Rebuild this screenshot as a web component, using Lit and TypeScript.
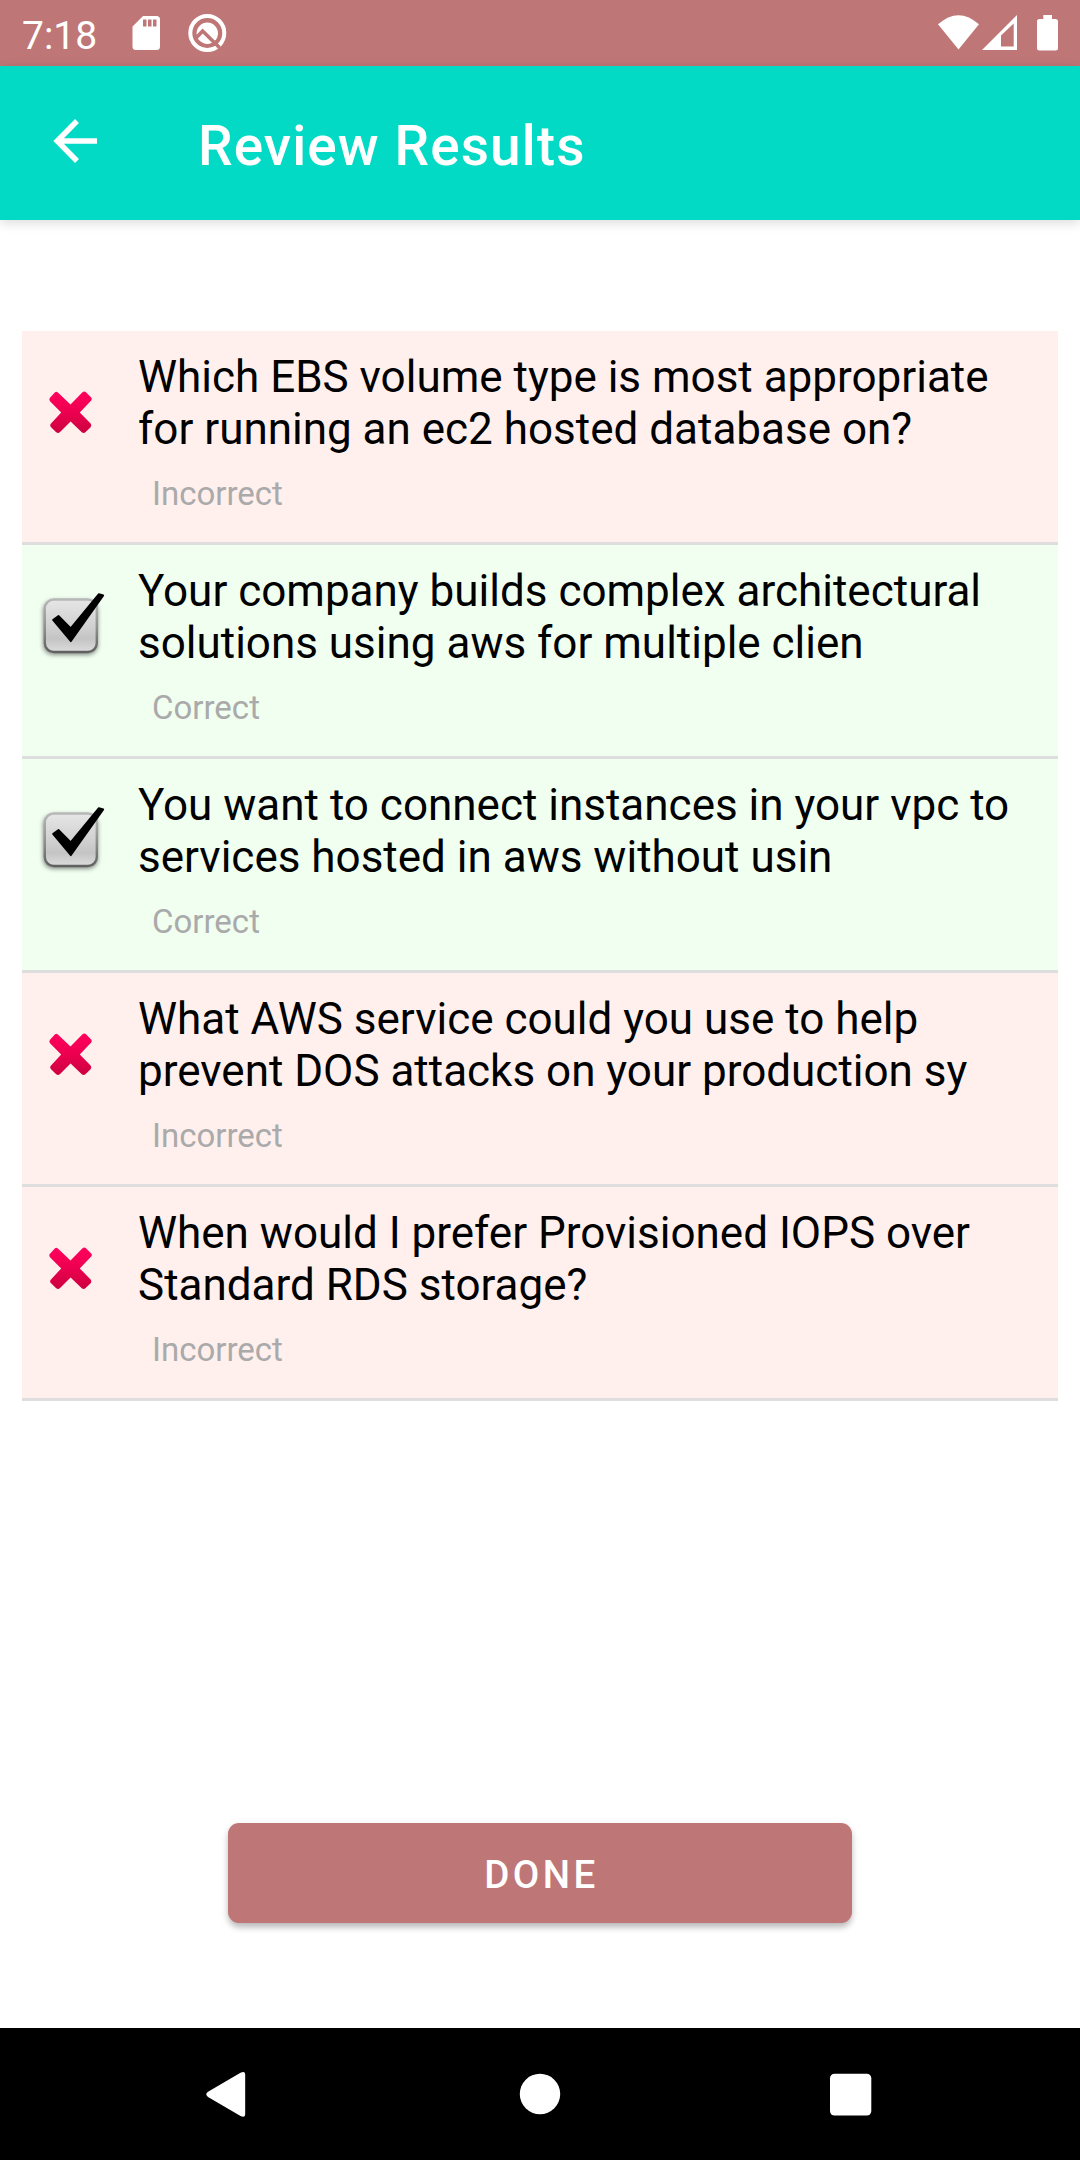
import { LitElement, html, svg, css } from "lit";
import { customElement, property } from "lit/decorators.js";

interface Result {
  question: [string, string];
  correct: boolean;
}

const RESULTS: Result[] = [
  { question: ["Which EBS volume type is most appropriate", "for running an ec2 hosted database on?"], correct: false },
  { question: ["Your company builds complex architectural", "solutions using aws for multiple clien"], correct: true },
  { question: ["You want to connect instances in your vpc to", "services hosted in aws without usin"], correct: true },
  { question: ["What AWS service could you use to help", "prevent DOS attacks on your production sy"], correct: false },
  { question: ["When would I prefer Provisioned IOPS over", "Standard RDS storage?"], correct: false },
];

const crossIcon = svg`
  <defs>
    <linearGradient id="red" x1="0" y1="23" x2="0" y2="63" gradientUnits="userSpaceOnUse">
      <stop offset="0" stop-color="#ff005c"/><stop offset=".45" stop-color="#ee0050"/><stop offset="1" stop-color="#cc0040"/>
    </linearGradient>
  </defs>
  <path d="M57.600 22.300L70.500 34.500L82.500 22.300Q84.300 20.900 86 22.300L91.200 27.400Q92.500 29 91.200 30.600L79.800 42.400L90.600 53.600Q92 55.400 90.600 57.200L85.400 62.200Q83.600 63.600 81.800 62.200L70.600 51.600L59.800 62.200Q58 63.600 56.200 62.200L50.800 57Q49.400 55.400 50.800 53.800L61.200 42.400L50 31.200Q48.600 29.400 50 27.800L54.800 22.500Q56.200 21.100 57.600 22.300Z" fill="url(#red)" transform="translate(-22 0)"/>`;

const checkIcon = svg`
  <defs>
    <linearGradient id="box" x1="0" y1="0" x2="0" y2="1">
      <stop offset="0" stop-color="#e6e6e6"/><stop offset=".55" stop-color="#cfcfcf"/><stop offset=".75" stop-color="#c4c4c4"/><stop offset="1" stop-color="#dcdcdc"/>
    </linearGradient>
    <linearGradient id="rim" x1="0" y1="0" x2="0" y2="1">
      <stop offset="0" stop-color="#b8b8b8"/><stop offset=".6" stop-color="#8a8a8a"/><stop offset="1" stop-color="#606060"/>
    </linearGradient>
    <filter id="soft" x="-20%" y="-20%" width="140%" height="140%"><feGaussianBlur stdDeviation="2"/></filter>
  </defs>
  <rect x="21" y="30.500" width="55" height="54.500" rx="10" fill="#555" opacity=".65" filter="url(#soft)"/>
  <rect x="22.800" y="29.500" width="52" height="52.500" rx="9" fill="url(#box)" stroke="url(#rim)" stroke-width="2.400"/>
  <path d="M31 50L36.500 45.900L48.600 58.200L76.800 24L81.300 25.400L48.800 71.300Z" fill="#000" stroke="#000" stroke-width="1.700" stroke-linejoin="round"/>`;

@customElement("status-bar")
export class StatusBar extends LitElement {
  static styles = css`
    :host { display: flex; align-items: center; height: 66px; background: #bf7676; color: #fff; }
    .time { font-size: 39px; line-height: 66px; padding: 3px 0 0 22px; width: 98px; height: 63px; }
    .icon { display: block; fill: #fff; }
    .spacer { flex: 1; }
  `;
  render() {
    return html`
      <span class="time">7:18</span>
      <svg class="icon" width="130" height="66" viewBox="120 0 130 66">
        <path fill-rule="evenodd" d="M143 16H156.500Q160 16 160 19.500V46.500Q160 50 156.500 50H136Q132.500 50 132.500 46.500V26.500ZM143 19.500V26.500H146.500V19.500ZM148 19.500V26.500H151.500V19.500ZM153 19.500V26.500H156.500V19.500Z"/>
        <circle cx="207.300" cy="33" r="17" fill="none" stroke="#fff" stroke-width="4"/>
        <circle cx="207.300" cy="33.300" r="10.700"/>
        <path d="M195.500 38.500L202.600 31L219.200 47.300" fill="none" stroke="#bf7676" stroke-width="3.600"/>
        <path d="M214.800 43L221 49.200" fill="none" stroke="#bf7676" stroke-width="3"/>
      </svg>
      <span class="spacer"></span>
      <svg class="icon" width="150" height="66" viewBox="930 0 150 66">
        <path d="M938 24.300Q958.500 6 979 24.300L958.500 49.500Z"/>
        <path fill-rule="evenodd" d="M982 50L1017 15V50ZM1001 35.500V46.500H1013.700V23.500Z"/>
        <path d="M1043.300 15H1052V19H1055.500Q1058 19 1058 21.500V48Q1058 50.500 1055.500 50.500H1039.500Q1037 50.500 1037 48V21.500Q1037 19 1039.500 19H1043.300Z"/>
      </svg>
    `;
  }
}

@customElement("app-bar")
export class AppBar extends LitElement {
  static styles = css`
    :host { display: flex; align-items: center; height: 154px; background: #03dac5; color: #fff; box-shadow: 0 3px 11px rgba(0, 0, 0, 0.14); }
    .back { display: block; margin: 0 0 4px 53px; }
    .title { margin: 0; padding: 6px 0 0 101px; font-size: 55px; font-weight: 500; line-height: 64px; letter-spacing: 1.07px; }
  `;
  render() {
    return html`
      <svg class="back" width="44" height="44" viewBox="0 0 44 44" fill="none" stroke="#fff" stroke-width="5.500">
        <path d="M24 2L4.200 22L24 42M4 22H44"/>
      </svg>
      <h1 class="title">Review Results</h1>
    `;
  }
}

@customElement("result-row")
export class ResultRow extends LitElement {
  @property({ attribute: false }) result!: Result;
  static styles = css`
    .row { display: flex; height: 211px; border-bottom: 3px solid #dedede; background: #fff0ee; color: #000; }
    .correct { background: #f0fff0; }
    .icon { display: block; width: 116px; height: 120px; flex: none; }
    .text { padding-top: 20px; }
    .line { font-size: 44px; line-height: 52px; white-space: nowrap; }
    .verdict { margin-top: 19px; padding-left: 14px; font-size: 33px; line-height: 40px; color: #aaa; }
  `;
  render() {
    const { question, correct } = this.result;
    return html`
      <div class="row ${correct ? "correct" : ""}">
        ${correct
          ? html`<svg class="icon" viewBox="0 -25 116 120">${checkIcon}</svg>`
          : html`<svg class="icon" viewBox="0 -39 116 120">${crossIcon}</svg>`}
        <div class="text">
          ${question.map((q) => html`<div class="line">${q}</div>`)}
          <div class="verdict">${correct ? "Correct" : "Incorrect"}</div>
        </div>
      </div>
    `;
  }
}

@customElement("nav-bar")
export class NavBar extends LitElement {
  static styles = css`
    :host { display: flex; align-items: center; justify-content: center; height: 132px; background: #000; }
    .icon { display: block; fill: #fff; }
  `;
  render() {
    return html`
      <svg class="icon" width="720" height="132" viewBox="180 2028 720 132">
        <path d="M240.500 2072.800Q245.200 2070.200 245.200 2075V2113.500Q245.200 2118.500 240.500 2116L208 2097Q204.500 2094.300 208 2091.800Z"/>
        <circle cx="540" cy="2094" r="20.200"/>
        <rect x="830" y="2073.700" width="41.300" height="41.800" rx="4.500"/>
      </svg>
    `;
  }
}

@customElement("app-root")
export class AppRoot extends LitElement {
  static styles = css`
    :host { display: flex; flex-direction: column; width: 1080px; height: 2160px; background: #fff; overflow: hidden; font-family: Roboto, "Noto Sans", sans-serif; }
    .content { flex: 1; display: flex; flex-direction: column; align-items: center; padding-bottom: 105px; }
    .list { width: 1036px; padding-top: 111px; }
    .done { margin-top: auto; width: 624px; height: 100px; box-sizing: border-box; padding: 2px 0 0 3px; border: 0; border-radius: 11px; background: #bf7676; color: #fff; font-family: inherit; font-size: 38.5px; font-weight: 500; letter-spacing: 3.4px; box-shadow: 0 5px 6px -1px rgba(0, 0, 0, 0.2), 0 3px 9px rgba(0, 0, 0, 0.13); }
  `;
  render() {
    return html`
      <status-bar></status-bar>
      <app-bar></app-bar>
      <main class="content">
        <div class="list">${RESULTS.map((r) => html`<result-row .result=${r}></result-row>`)}</div>
        <button class="done">DONE</button>
      </main>
      <nav-bar></nav-bar>
    `;
  }
}
